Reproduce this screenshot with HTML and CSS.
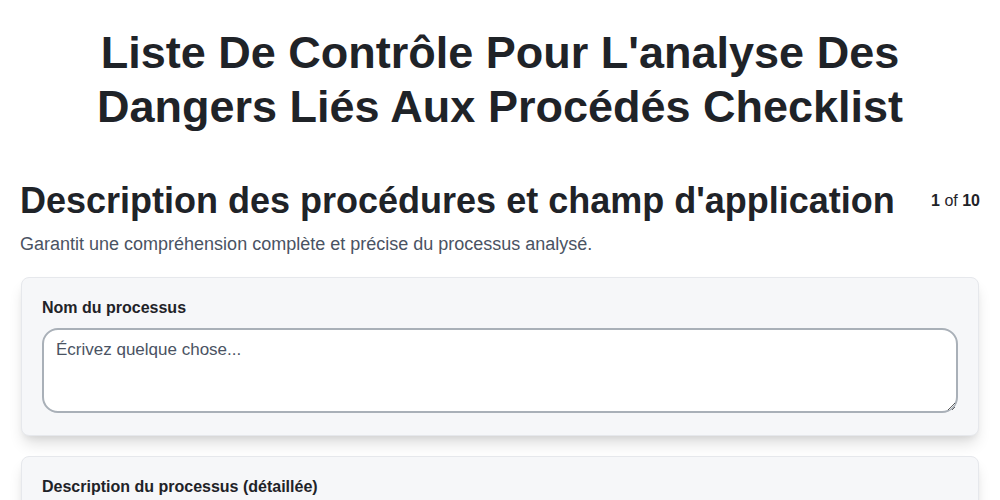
FILE: index.html
```html
<!DOCTYPE html>
<html lang="fr">
<head>
<meta charset="utf-8">
<link rel="stylesheet" href="styles.css">
</head>
<body>
<main class="page">
  <h1 class="title">Liste De Contrôle Pour L'analyse Des Dangers Liés Aux Procédés Checklist</h1>
  <section class="section">
    <div class="section-head">
      <h2 class="section-title">Description des procédures et champ d'application</h2>
      <div class="pager"><b>1</b> of <b>10</b></div>
    </div>
    <p class="section-desc">Garantit une compréhension complète et précise du processus analysé.</p>
    <div class="card">
      <label class="label">Nom du processus</label>
      <textarea class="input" placeholder="Écrivez quelque chose..."></textarea>
    </div>
    <div class="card">
      <label class="label">Description du processus (détaillée)</label>
      <textarea class="input" placeholder="Écrivez quelque chose..."></textarea>
    </div>
  </section>
</main>
</body>
</html>
```
FILE: styles.css
```css
* { box-sizing: border-box; }
html, body { margin: 0; padding: 0; background: #fff; }
body { font-family: "Liberation Sans", Arial, sans-serif; color: #1f2328; }
.page { padding: 26px 20px; }
.title {
  margin: 0 auto 45px;
  max-width: 900px;
  text-align: center;
  font-size: 45px;
  line-height: 54px;
  font-weight: 700;
  color: #1f2328;
}
.section-head { display: flex; justify-content: space-between; align-items: center; }
.section-title { margin: 0; font-size: 36px; line-height: 44px; font-weight: 700; color: #1f2328; }
.pager { font-size: 16px; color: #1f2328; }
.section-desc { margin: 10px 0 22px; font-size: 18px; line-height: 22px; color: #4a5363; }
.card {
  background: #f6f7f9;
  border: 1px solid #e6e8ec;
  border-radius: 8px;
  padding: 21px 20px 22px;
  box-shadow: 0 10px 15px -3px rgba(0,0,0,0.14), 0 4px 6px -2px rgba(0,0,0,0.06);
  margin: 0 1px 20px;
  display: flex;
  flex-direction: column;
  gap: 11px;
}
.label { font-size: 16px; font-weight: 700; color: #1f2328; }
.input {
  height: 85px;
  border: 2px solid #a9b0b8;
  border-radius: 16px;
  background: #fff;
  padding: 10px 12px;
  font-family: "Liberation Sans", Arial, sans-serif;
  font-size: 17px;
  resize: vertical;
}
.input::placeholder { color: #4a5363; }
```
